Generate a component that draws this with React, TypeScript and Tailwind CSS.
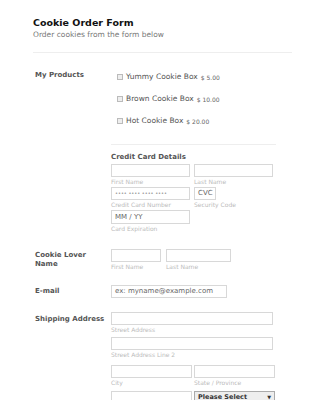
import React from "react";

function Box({ w, h = 13, children }: { w: string; h?: number; children?: React.ReactNode }) {
  return (
    <div
      className={`${w} border border-[#d8d8d8] bg-white flex items-center px-[3px] text-[7px] text-[#666]`}
      style={{ height: h }}
    >
      {children}
    </div>
  );
}

function Sub({ children }: { children: React.ReactNode }) {
  return <div className="text-[6px] leading-[10px] text-[#bbb]">{children}</div>;
}

function Product({ name, price }: { name: string; price: string }) {
  return (
    <div className="flex items-center h-[22px]">
      <span className="w-[6px] h-[6px] border border-[#bbb] bg-[#eee] mr-[3px]" />
      <span className="text-[7.5px] text-[#555]">{name}</span>
      <span className="text-[6px] text-[#666] ml-[3px]">{price}</span>
    </div>
  );
}

export default function App() {
  return (
    <div className="w-[325px] h-[400px] overflow-hidden bg-white font-['DejaVu_Sans',sans-serif]">
      <div className="pt-[16px] px-[33px]">
        <h1 className="text-[9.5px] font-bold text-[#111] leading-[13px]">Cookie Order Form</h1>
        <p className="text-[7.5px] text-[#777] leading-[12px]">Order cookies from the form below</p>
        <div className="mt-[11px] border-t border-[#eee]" />
      </div>

      <div className="pl-[35px] mt-[13px]">
        {/* products */}
        <div className="flex">
          <div className="w-[76px] text-[7px] font-bold text-[#555] leading-[10px] pt-[4px]">My Products</div>
          <div className="pl-[6px]">
            <Product name="Yummy Cookie Box" price="$ 5.00" />
            <Product name="Brown Cookie Box" price="$ 10.00" />
            <Product name="Hot Cookie Box" price="$ 20.00" />
          </div>
        </div>

        {/* credit card */}
        <div className="ml-[76px] w-[165px] mt-[12px] border-t border-[#eee] pt-[7px]">
          <div className="text-[7px] font-bold text-[#555] leading-[11px]">Credit Card Details</div>
          <div className="flex gap-[4px] mt-[1px]">
            <div>
              <Box w="w-[79px]" />
              <Sub>First Name</Sub>
            </div>
            <div>
              <Box w="w-[79px]" />
              <Sub>Last Name</Sub>
            </div>
          </div>
          <div className="flex gap-[4px]">
            <div>
              <Box w="w-[79px]">
                <span className="text-[5px] text-[#888]">•••• •••• •••• ••••</span>
              </Box>
              <Sub>Credit Card Number</Sub>
            </div>
            <div>
              <Box w="w-[22px]">CVC</Box>
              <Sub>Security Code</Sub>
            </div>
          </div>
          <div>
            <Box w="w-[79px]" h={14}>MM / YY</Box>
            <Sub>Card Expiration</Sub>
          </div>
        </div>

        {/* name */}
        <div className="flex mt-[15px]">
          <div className="w-[76px] text-[7px] font-bold text-[#555] leading-[9px] pt-[2px]">
            Cookie Lover
            <br />
            Name
          </div>
          <div className="flex gap-[5px]">
            <div>
              <Box w="w-[50px]" />
              <Sub>First Name</Sub>
            </div>
            <div>
              <Box w="w-[65px]" />
              <Sub>Last Name</Sub>
            </div>
          </div>
        </div>

        {/* email */}
        <div className="flex mt-[13px] items-center">
          <div className="w-[76px] text-[7px] font-bold text-[#555]">E-mail</div>
          <Box w="w-[116px]">ex: myname@example.com</Box>
        </div>

        {/* shipping */}
        <div className="flex mt-[14px]">
          <div className="w-[76px] text-[7px] font-bold text-[#555] leading-[10px] pt-[2px] whitespace-nowrap">
            Shipping Address
          </div>
          <div className="flex flex-col">
            <Box w="w-[162px]" />
            <Sub>Street Address</Sub>
            <div className="mt-[2px]">
              <Box w="w-[162px]" />
              <Sub>Street Address Line 2</Sub>
            </div>
            <div className="flex gap-[2px] mt-[5px]">
              <div>
                <Box w="w-[81px]" />
                <Sub>City</Sub>
              </div>
              <div>
                <Box w="w-[81px]" />
                <Sub>State / Province</Sub>
              </div>
            </div>
            <div className="flex gap-[2px] mt-[3px]">
              <Box w="w-[81px]" />
              <div className="w-[81px] h-[12px] border border-[#aaa] bg-[#eee] flex items-center justify-between px-[3px]">
                <span className="text-[6.5px] font-bold text-[#333] leading-[8px]">Please Select</span>
                <span className="text-[5px] text-[#333] leading-[8px]">▼</span>
              </div>
            </div>
          </div>
        </div>
      </div>
    </div>
  );
}
